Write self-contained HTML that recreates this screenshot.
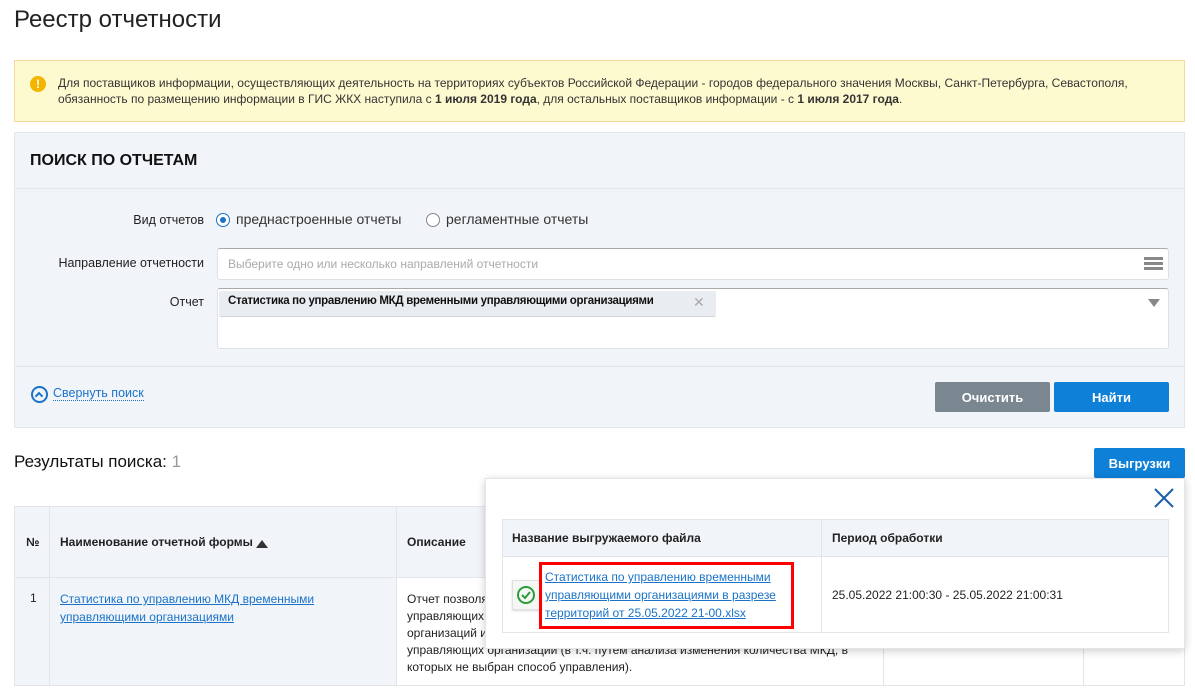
<!DOCTYPE html>
<html><head><meta charset="utf-8"><style>
*{box-sizing:border-box;margin:0;padding:0}
body{width:1195px;height:696px;background:#fff;font-family:"Liberation Sans",sans-serif;color:#222;position:relative;overflow:hidden;font-size:12px}
.a{position:absolute}
a{color:#1a73c8;text-decoration:underline}
.btn{position:absolute;color:#fff;font-weight:bold;font-size:13px;display:flex;align-items:center;justify-content:center;border-radius:2px}
.lbl{position:absolute;text-align:right;font-size:12.5px;color:#222}
</style></head><body>
<div class="a" style="left:14px;top:6px;font-size:24px;color:#222">Реестр отчетности</div>

<div class="a" style="left:14px;top:60px;width:1171px;height:62px;background:#fefad0;border:1px solid #f6d8a0"></div>
<div class="a" style="left:30px;top:76px;width:16px;height:16px;border-radius:50%;background:#f5b400;color:#fff;font-weight:bold;font-size:12px;text-align:center;line-height:16px">!</div>
<div class="a" style="left:58px;top:75px;width:1120px;line-height:16px;font-size:12px;color:#333">Для поставщиков информации, осуществляющих деятельность на территориях субъектов Российской Федерации - городов федерального значения Москвы, Санкт-Петербурга, Севастополя, обязанность по размещению информации в ГИС ЖКХ наступила с <b>1 июля 2019 года</b>, для остальных поставщиков информации - с <b>1 июля 2017 года</b>.</div>

<div class="a" style="left:14px;top:132px;width:1171px;height:296px;background:#f1f4f8;border:1px solid #e2e6ea"></div>
<div class="a" style="left:15px;top:188px;width:1169px;height:1px;background:#e2e6ea"></div>
<div class="a" style="left:30px;top:152px;font-size:16px;font-weight:bold;color:#111">ПОИСК ПО ОТЧЕТАМ</div>

<div class="lbl" style="left:60px;width:144px;top:213px">Вид отчетов</div>
<div class="a" style="left:216px;top:213px;width:14px;height:14px;border:1.5px solid #1a73c8;border-radius:50%;background:#fff"><div style="margin:2.5px;width:6px;height:6px;border-radius:50%;background:#1a73c8"></div></div>
<div class="a" style="left:236px;top:211px;font-size:14px;color:#333">преднастроенные отчеты</div>
<div class="a" style="left:426px;top:213px;width:14px;height:14px;border:1.5px solid #888;border-radius:50%;background:#fff"></div>
<div class="a" style="left:446px;top:211px;font-size:14px;color:#333">регламентные отчеты</div>

<div class="lbl" style="left:30px;width:174px;top:256px">Направление отчетности</div>
<div class="a" style="left:217px;top:248px;width:952px;height:32px;background:#fff;border:1px solid #dde1e5;border-top-color:#aaa;border-radius:3px"></div>
<div class="a" style="left:228px;top:257px;color:#aaa;font-size:12px">Выберите одно или несколько направлений отчетности</div>
<div class="a" style="left:1144px;top:257px;width:19px;height:3px;background:#888;box-shadow:0 5px 0 #888,0 10px 0 #888"></div>

<div class="lbl" style="left:60px;width:144px;top:295px">Отчет</div>
<div class="a" style="left:217px;top:288px;width:952px;height:61px;background:#fff;border:1px solid #dde1e5;border-top-color:#aaa;border-radius:3px"></div>
<div class="a" style="left:219px;top:291px;width:497px;height:26px;background:#e9edf1;border-bottom:1px solid #cfd4d9;border-radius:2px"></div>
<div class="a" style="left:228px;top:295px;font-weight:bold;font-size:11.5px;letter-spacing:-0.3px;color:#111">Статистика по управлению МКД временными управляющими организациями</div>
<div class="a" style="left:693px;top:294px;color:#aaa;font-size:14px">✕</div>
<div class="a" style="left:1148px;top:299px;width:0;height:0;border-left:6px solid transparent;border-right:6px solid transparent;border-top:8px solid #888"></div>

<div class="a" style="left:15px;top:366px;width:1169px;height:1px;background:#e2e6ea"></div>
<div class="a" style="left:31px;top:386px;width:17px;height:17px;border:2px solid #1a73c8;border-radius:50%"></div>
<div class="a" style="left:36px;top:393px;width:6px;height:6px;border-left:2px solid #1a73c8;border-top:2px solid #1a73c8;transform:rotate(45deg)"></div>
<div class="a" style="left:53px;top:386px;color:#1a73c8;font-size:12.5px;border-bottom:1px dotted #1a73c8;line-height:14px">Свернуть поиск</div>
<div class="btn" style="left:935px;top:382px;width:115px;height:30px;background:#7a8690">Очистить</div>
<div class="btn" style="left:1054px;top:382px;width:115px;height:30px;background:#0f80d8">Найти</div>

<div class="a" style="left:14px;top:452px;font-size:17px;color:#111">Результаты поиска: <span style="color:#999">1</span></div>
<div class="btn" style="left:1094px;top:448px;width:91px;height:30px;background:#0f80d8">Выгрузки</div>

<div class="a" style="left:14px;top:506px;width:1171px;height:180px;border:1px solid #e2e6ea"></div>
<div class="a" style="left:15px;top:507px;width:1169px;height:71px;background:#f1f4f8;border-bottom:1px solid #e2e6ea"></div>
<div class="a" style="left:15px;top:578px;width:382px;height:107px;background:#f1f4f8"></div>
<div class="a" style="left:49px;top:507px;width:1px;height:178px;background:#e2e6ea"></div>
<div class="a" style="left:396px;top:507px;width:1px;height:178px;background:#e2e6ea"></div>
<div class="a" style="left:883px;top:507px;width:1px;height:178px;background:#e2e6ea"></div>
<div class="a" style="left:1083px;top:507px;width:1px;height:178px;background:#e2e6ea"></div>
<div class="a" style="left:26px;top:535px;font-weight:bold">№</div>
<div class="a" style="left:60px;top:535px;font-weight:bold">Наименование отчетной формы</div>
<div class="a" style="left:256px;top:540px;width:0;height:0;border-left:6px solid transparent;border-right:6px solid transparent;border-bottom:8px solid #333"></div>
<div class="a" style="left:407px;top:535px;font-weight:bold">Описание</div>
<div class="a" style="left:30px;top:591px">1</div>
<div class="a" style="left:60px;top:590px;width:300px;line-height:18px"><a>Статистика по управлению МКД временными управляющими организациями</a></div>
<div class="a" style="left:407px;top:591px;width:476px;line-height:17px;color:#222;white-space:nowrap">Отчет позволяет получить статистику<br>управляющих организаций<br>организаций и сведения о деятельности<br>управляющих организаций (в т.ч. путем анализа изменения количества МКД, в<br>которых не выбран способ управления).</div>

<div class="a" style="left:485px;top:478px;width:700px;height:171px;background:#fff;border:1px solid #e5e5e5;box-shadow:0 2px 8px rgba(0,0,0,.2)"></div>
<svg class="a" style="left:1153px;top:487px" width="22" height="22"><path d="M2 2L20 20M20 2L2 20" stroke="#1a5fa8" stroke-width="2"/></svg>
<div class="a" style="left:502px;top:519px;width:667px;height:114px;border:1px solid #e2e6ea"></div>
<div class="a" style="left:503px;top:520px;width:665px;height:37px;background:#f1f4f8;border-bottom:1px solid #e2e6ea"></div>
<div class="a" style="left:821px;top:520px;width:1px;height:112px;background:#e2e6ea"></div>
<div class="a" style="left:512px;top:531px;font-weight:bold">Название выгружаемого файла</div>
<div class="a" style="left:832px;top:531px;font-weight:bold">Период обработки</div>
<div class="a" style="left:512px;top:580px;width:30px;height:30px;background:#f5f7f5;border:1px solid #e0e0e0;box-shadow:0 1px 2px rgba(0,0,0,.15)"></div>
<svg class="a" style="left:516px;top:585px" width="20" height="20"><circle cx="10" cy="10" r="8" fill="none" stroke="#2a9d3a" stroke-width="2"/><path d="M6 10l3 3 5-6" fill="none" stroke="#2a9d3a" stroke-width="2"/></svg>
<div class="a" style="left:539px;top:562px;width:255px;height:67px;border:3px solid #f00"></div>
<div class="a" style="left:545px;top:568px;width:245px;line-height:18px"><a>Статистика по управлению временными управляющими организациями в разрезе территорий от 25.05.2022 21-00.xlsx</a></div>
<div class="a" style="left:832px;top:588px">25.05.2022 21:00:30 - 25.05.2022 21:00:31</div>
</body></html>
